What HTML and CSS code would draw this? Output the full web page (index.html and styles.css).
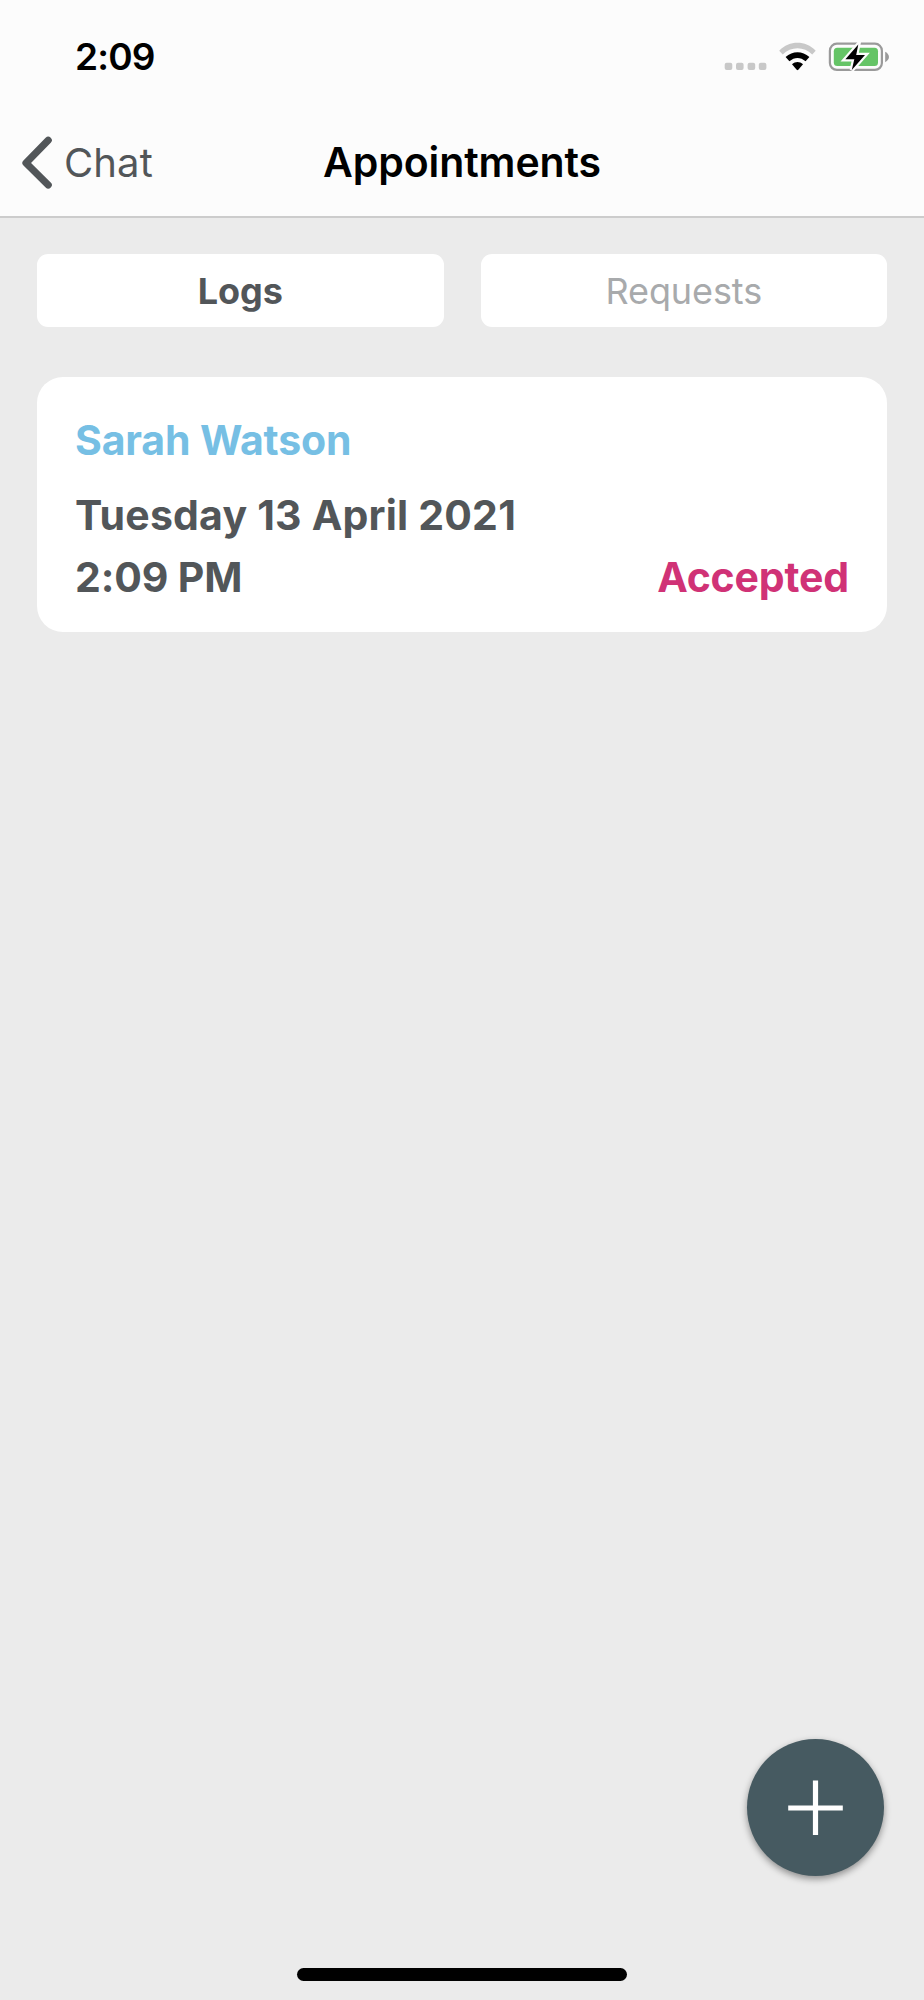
FILE: index.html
```html
<!DOCTYPE html>
<html lang="en">
<head>
<meta charset="utf-8">
<title>Appointments</title>
<link rel="stylesheet" href="styles.css">
</head>
<body>
<div class="screen">
  <header class="header">
    <div class="status">
      <span class="time">2:09</span>
      <svg class="status-icons" viewBox="0 0 170 36" width="170" height="36">
        <g fill="#c8c8c8">
          <rect x="4.7" y="22.7" width="7.6" height="7.4" rx="2"/>
          <rect x="16" y="22.7" width="7.6" height="7.4" rx="2"/>
          <rect x="27.6" y="22.7" width="7.6" height="7.4" rx="2"/>
          <rect x="38.8" y="22.7" width="7.6" height="7.4" rx="2"/>
        </g>
        <path d="M59.2 10.7C69.500 .2 85.500 .2 95.700 10.700L92.200 14.500C84 6.200 71 6.200 62.700 14.500Z" fill="#c8c8c8"/>
        <path d="M65.600 17C72.500 10.500 82.500 10.500 89.400 17L85.600 21.300C80.500 16.800 74.500 16.800 69.400 21.300Z"/>
        <path d="M72 24.200C75.500 21.300 79.500 21.300 83 24.200L78.300 29.700Q77.500 30.600 76.700 29.700Z"/>
        <rect x="109.900" y="3.700" width="52" height="26.200" rx="7" fill="none" stroke="#9a9a9a" stroke-width="2.200"/>
        <path d="M165.200 11.800C170.200 14.500 170.200 19.500 165.200 22.200Z" fill="#9a9a9a"/>
        <rect x="113.800" y="7.700" width="44.200" height="18.300" rx="3.500" fill="#65c466"/>
        <path d="M138.300 4.500L125.400 19.200H134.300L131.800 30L145 14.900H136.200Z" fill="#000" stroke="#fcfcfc" stroke-width="4.400" paint-order="stroke"/>
      </svg>
    </div>
    <nav class="nav">
      <a class="back">
        <svg class="chevron" viewBox="0 0 32 54" width="32" height="54"><path d="M28.200 4.300L6 27L28.200 49" fill="none" stroke="#525659" stroke-width="7.200" stroke-linecap="round" stroke-linejoin="round"/></svg>
        <span class="back-label">Chat</span>
      </a>
      <h1 class="title">Appointments</h1>
    </nav>
  </header>
  <main class="content">
    <div class="tabs">
      <button class="tab tab-active">Logs</button>
      <button class="tab tab-idle">Requests</button>
    </div>
    <article class="card">
      <div class="name">Sarah Watson</div>
      <div class="date">Tuesday 13 April 2021</div>
      <div class="row"><span class="hour">2:09 PM</span><span class="state">Accepted</span></div>
    </article>
  </main>
  <footer class="footer">
    <button class="add" aria-label="Add"><svg viewBox="0 0 56 56" width="56" height="56"><path d="M27.500 .5V55M.2 28H54.800" stroke="#fff" stroke-width="5.200"/></svg></button>
    <div class="home"></div>
  </footer>
</div>
</body>
</html>
```
FILE: styles.css
```css
* { box-sizing: border-box; }
body { margin: 0; background: #ebebeb; font-family: Inter, "Liberation Sans", sans-serif; color: #525659; }
button { border: 0; margin: 0; padding: 0; font: inherit; }
.screen { height: 2000px; display: flex; flex-direction: column; }
.header { height: 218px; background: #fcfcfc; border-bottom: 2px solid #cccccc; }
.status { height: 108px; padding: 5px 34px 0 75px; display: flex; justify-content: space-between; align-items: center; }
.time { font-size: 37px; font-weight: 600; color: #000; letter-spacing: -0.85px; }
.status-icons { flex: none; margin-top: 3px; }
.nav { height: 108px; padding: 0 20px; display: grid; grid-template-columns: 1fr auto 1fr; align-items: center; }
.back { display: flex; align-items: center; }
.chevron { flex: none; margin-top: 2px; }
.back-label { font-size: 40px; margin-left: 12px; letter-spacing: 0.1px; }
.title { margin: 0; font-size: 41px; font-weight: 600; color: #000; letter-spacing: -0.1px; }
.content { flex: 1; padding: 36px 37px 0; }
.tabs { display: grid; grid-template-columns: 1fr 1fr; gap: 37px; }
.tab { height: 73px; border-radius: 11px; background: #fff; font-size: 36px; }
.tab-active { font-weight: 700; color: #525659; letter-spacing: -0.1px; }
.tab-idle { color: #a8aaac; letter-spacing: -0.1px; }
.card { margin-top: 50px; height: 255px; border-radius: 26px; background: #fff; padding: 32px 38px 0; font-size: 41px; font-weight: 700; line-height: 62px; letter-spacing: -0.15px; }
.name { color: #76bfe4; margin-bottom: 13px; }
.date { letter-spacing: 0.2px; }
.row { display: flex; justify-content: space-between; }
.state { color: #d03276; }
.footer { display: flex; flex-direction: column; }
.add { align-self: flex-end; margin-right: 40px; width: 137px; height: 137px; border-radius: 50%; background: #465a61; display: flex; align-items: center; justify-content: center; box-shadow: 0 3px 7px rgba(0, 0, 0, .4); }
.home { align-self: center; margin: 92px 0 19px; width: 330px; height: 13px; border-radius: 7px; background: #000; }
```
